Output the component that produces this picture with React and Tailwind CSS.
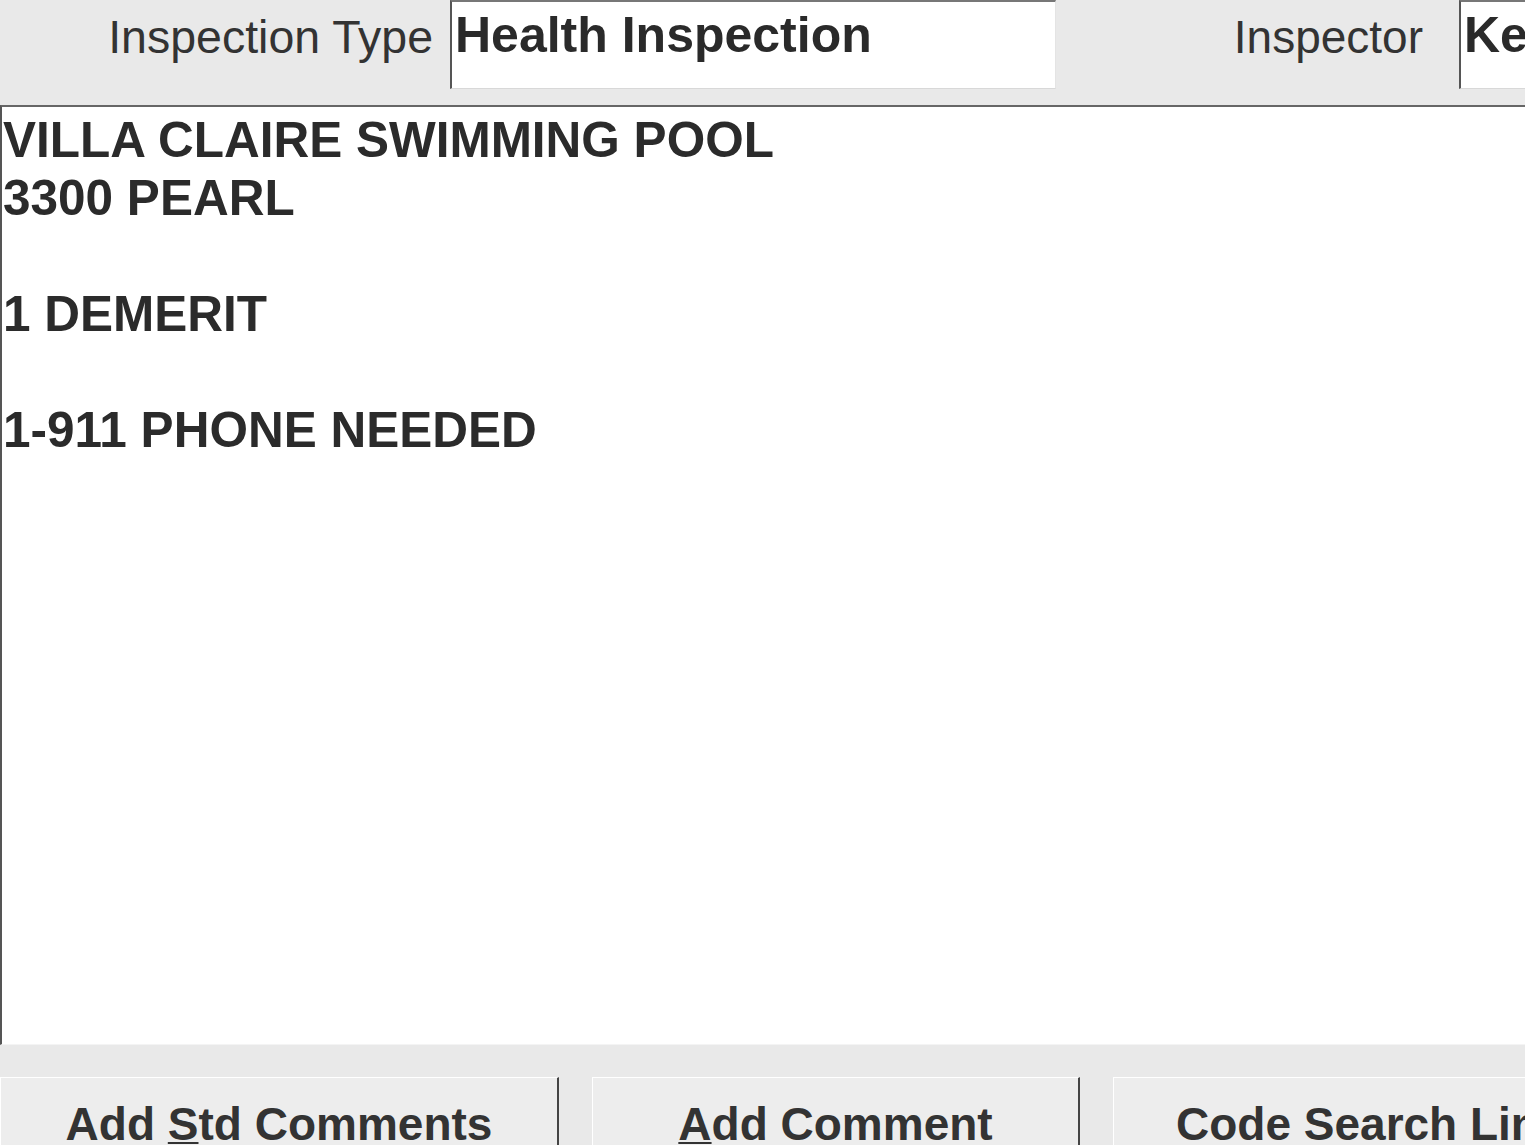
const FONT = { fontFamily: '"Liberation Sans", Arial, sans-serif' };

function Field({ label, value, labelClass, boxClass }) {
  return (
    <div className="flex items-start h-full">
      <div className={`leading-none text-[#333] pt-[14px] ${labelClass}`}>
        {label}
      </div>
      <div
        className={`h-[89px] bg-white border-l-2 border-t-2 border-l-[#555] border-t-[#777] border-b border-b-[#d8d8d8] ${boxClass}`}
      >
        <div className="text-[50px] font-bold leading-none text-[#2a2a2a] pl-[3px] pt-[8px] whitespace-nowrap">
          {value}
        </div>
      </div>
    </div>
  );
}

function ActionButton({ children, className, last }) {
  return (
    <div
      className={`h-full bg-[#ededed] border-t border-l border-t-white border-l-white flex pt-[23px] overflow-hidden ${
        last ? "justify-start pl-[62px]" : "justify-center border-r-2 border-r-[#444]"
      } ${className}`}
    >
      <span className="text-[46px] font-bold leading-none text-[#333] whitespace-nowrap">
        {children}
      </span>
    </div>
  );
}

const Mnemonic = ({ children }) => (
  <span className="underline decoration-2 underline-offset-[2px]">{children}</span>
);

export default function App() {
  return (
    <div
      className="w-[1525px] h-[1145px] overflow-hidden bg-[#e9e9e9] flex flex-col"
      style={FONT}
    >
      {/* header row */}
      <div className="h-[105px] shrink-0 flex">
        <Field
          label="Inspection Type"
          value="Health Inspection"
          labelClass="w-[450px] text-right pr-[17px] text-[46.5px]"
          boxClass="w-[606px] border-r border-r-[#e4e4e4]"
        />
        <div className="flex-1" />
        <Field
          label="Inspector"
          value="Ke"
          labelClass="pr-[36px] text-[46px]"
          boxClass="w-[66px]"
        />
      </div>

      {/* comment text area */}
      <div className="h-[940px] shrink-0 bg-white border-t-2 border-t-[#666] border-l-2 border-l-[#555] border-b border-b-[#f4f4f4]">
        <div className="text-[49.5px] font-bold leading-[58px] text-[#2b2b2b] pl-[1px] pt-[4px]">
          <div>VILLA CLAIRE SWIMMING POOL</div>
          <div>3300 PEARL</div>
          <div>&nbsp;</div>
          <div>1 DEMERIT</div>
          <div>&nbsp;</div>
          <div>1-911 PHONE NEEDED</div>
        </div>
      </div>

      {/* buttons */}
      <div className="flex-1 pt-[32px] flex gap-[33px]">
        <ActionButton className="w-[559px]">
          Add <Mnemonic>S</Mnemonic>td Comments
        </ActionButton>
        <ActionButton className="w-[488px]">
          <Mnemonic>A</Mnemonic>dd Comment
        </ActionButton>
        <ActionButton className="flex-1" last>
          Code Search Link
        </ActionButton>
      </div>
    </div>
  );
}
